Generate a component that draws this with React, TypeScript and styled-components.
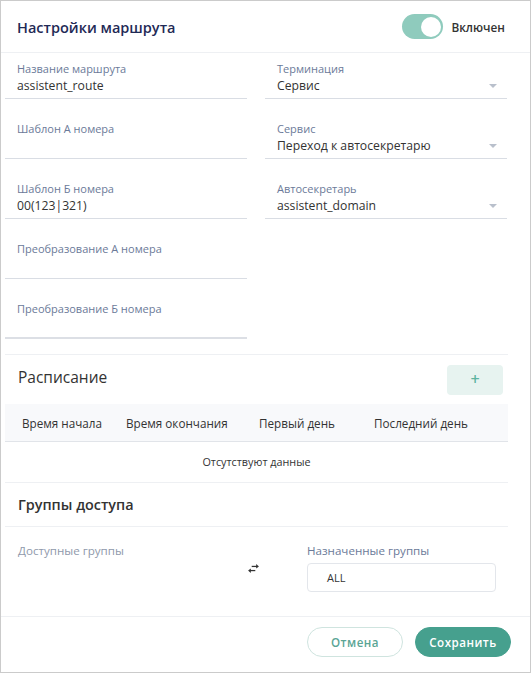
import React from 'react';
import styled, { createGlobalStyle } from 'styled-components';

const GlobalStyle = createGlobalStyle`
	html, body {
		margin: 0;
		padding: 0;
		background: #fff;
	}
	body {
		font-family: "Open Sans", "Noto Sans", sans-serif;
		color: #333;
	}
	* { box-sizing: border-box; }
`;

const Frame = styled.div`
	width: 531px;
	height: 673px;
	border: 1px solid #cbcbcb;
	display: flex;
	flex-direction: column;
	background: #fff;
	overflow: hidden;
`;

const Header = styled.div`
	height: 52px;
	flex-shrink: 0;
	display: flex;
	align-items: center;
	justify-content: space-between;
	padding: 0 25px 0 16px;
	border-bottom: 1px solid #eef0f3;
`;

const Title = styled.h1`
	margin: 0;
	font-size: 14.5px;
	font-weight: 600;
	color: #1f2a56;
	padding-top: 2px;
`;

const SwitchWrap = styled.label`
	display: flex;
	align-items: center;
	gap: 8px;
	font-size: 11.8px;
	font-weight: 600;
	color: #333;
`;

const Track = styled.span<{ $on: boolean }>`
	position: relative;
	width: 41px;
	height: 25px;
	border-radius: 13px;
	background: ${p => (p.$on ? '#8fcbbd' : '#d5d9e0')};
	&::after {
		content: '';
		position: absolute;
		top: 2.5px;
		left: ${p => (p.$on ? '19px' : '2px')};
		width: 20px;
		height: 20px;
		border-radius: 50%;
		background: #fff;
	}
`;

const Body = styled.div`
	flex: 1;
	display: flex;
	flex-direction: column;
	padding: 0 22px 0 4px;
`;

const FormGrid = styled.div`
	display: grid;
	grid-template-columns: 242px 242px;
	column-gap: 18px;
	row-gap: 15px;
	padding: 1px 0 15px;
	border-bottom: 1px solid #eef0f3;
`;

const Field = styled.div<{ $thick?: boolean }>`
	height: 45px;
	padding: 7px 12px 0;
	border-bottom: ${p => (p.$thick ? '2px solid #dcdfe5' : '1px solid #d9dde4')};
	position: relative;
`;

const Label = styled.div`
	font-size: 11px;
	line-height: 15px;
	color: #6b7a99;
`;

const Value = styled.div`
	font-size: 12.2px;
	line-height: 19px;
	color: #333;
`;

const Caret = styled.span`
	position: absolute;
	right: 10px;
	bottom: 10px;
	width: 0;
	height: 0;
	border-left: 4px solid transparent;
	border-right: 4px solid transparent;
	border-top: 4px solid #b9c0cc;
`;

const SectionHead = styled.div`
	display: flex;
	align-items: center;
	justify-content: space-between;
	padding: 9px 5px 0 13px;
	height: 40px;
`;

const SectionTitle = styled.h2<{ $bold?: boolean }>`
	margin: 0;
	font-size: ${p => (p.$bold ? '14.4px' : '15.5px')};
	font-weight: ${p => (p.$bold ? 600 : 500)};
	color: #333;
	margin-top: ${p => (p.$bold ? '0' : '-6px')};
`;

const AddButton = styled.button`
	width: 56px;
	height: 30px;
	border: none;
	border-radius: 4px;
	background: #e7f3f0;
	color: #5db3a0;
	font-size: 16px;
	font-weight: 600;
	font-family: inherit;
	display: flex;
	align-items: center;
	justify-content: center;
	padding: 0 0 2px;
`;

const Table = styled.div`
	margin-top: 9px;
	border-bottom: 1px solid #eef0f3;
`;

const TableHead = styled.div`
	display: grid;
	grid-template-columns: 104px 133px 115px auto;
	align-items: center;
	height: 38px;
	padding-left: 17px;
	background: #f8f9fb;
	border-bottom: 1px solid #e1e4e9;
	font-size: 11.7px;
	color: #333;
`;

const Empty = styled.div`
	height: 40px;
	display: flex;
	align-items: center;
	justify-content: center;
	font-size: 10.8px;
	color: #333;
	padding-bottom: 2px;
`;

const GroupsHead = styled.div`
	height: 44px;
	display: flex;
	align-items: center;
	padding: 0 13px;
	border-bottom: 1px solid #eef0f3;
`;

const Groups = styled.div`
	flex: 1;
	display: grid;
	grid-template-columns: 229px 60px 189px;
	padding: 15px 12px 0 13px;
`;

const GroupLabel = styled.div<{ $muted?: boolean }>`
	font-size: 11.6px;
	line-height: 17px;
	color: ${p => (p.$muted ? '#8f99ab' : '#6b7a99')};
`;

const SwapCell = styled.div`
	padding-top: 14px;
	color: #333;
`;

const GroupBox = styled.div`
	margin-top: 4px;
	height: 29px;
	border: 1px solid #e3e6eb;
	border-radius: 4px;
	display: flex;
	align-items: center;
	padding-left: 19px;
	font-size: 11px;
	color: #333;
`;

const Footer = styled.div`
	height: 56px;
	flex-shrink: 0;
	border-top: 1px solid #eef0f3;
	display: flex;
	justify-content: flex-end;
	align-items: flex-start;
	gap: 12px;
	padding: 10px 19px 0 0;
`;

const Btn = styled.button<{ $primary?: boolean }>`
	width: 96px;
	height: 30px;
	border-radius: 15px;
	font-family: inherit;
	font-size: 11.6px;
	font-weight: 600;
	letter-spacing: 0.5px;
	border: 1px solid ${p => (p.$primary ? '#46a08e' : '#cfe4df')};
	background: ${p => (p.$primary ? '#46a08e' : '#fff')};
	color: ${p => (p.$primary ? '#fff' : '#5aa595')};
`;

const SwapIcon = () => (
	<svg width="13" height="9" viewBox="0 0 14 10" fill="#333">
		<rect x="5" y="2" width="6" height="1.4" />
		<path d="M10 0 L13 2.7 L10 5 Z" />
		<rect x="3" y="6.6" width="6" height="1.4" />
		<path d="M4 5 L1 7.3 L4 10 Z" />
	</svg>
);

type F = { label: string; value?: string; select?: boolean; thick?: boolean };

const left: F[] = [
	{ label: 'Название маршрута', value: 'assistent_route' },
	{ label: 'Шаблон А номера' },
	{ label: 'Шаблон Б номера', value: '00(123|321)' },
	{ label: 'Преобразование А номера' },
	{ label: 'Преобразование Б номера', thick: true },
];

const right: F[] = [
	{ label: 'Терминация', value: 'Сервис', select: true },
	{ label: 'Сервис', value: 'Переход к автосекретарю', select: true },
	{ label: 'Автосекретарь', value: 'assistent_domain', select: true },
];

const columns = ['Время начала', 'Время окончания', 'Первый день', 'Последний день'];

export default function App() {
	const rows: (F | null)[] = [];
	for (let i = 0; i < left.length; i++) {
		rows.push(left[i]);
		rows.push(right[i] || null);
	}
	return (
		<>
			<GlobalStyle />
			<Frame>
				<Header>
					<Title>Настройки маршрута</Title>
					<SwitchWrap>
						<Track $on />
						Включен
					</SwitchWrap>
				</Header>
				<Body>
					<FormGrid>
						{rows.map((f, i) =>
							f ? (
								<Field key={i} $thick={f.thick}>
									<Label>{f.label}</Label>
									<Value>{f.value || '\u00a0'}</Value>
									{f.select && <Caret />}
								</Field>
							) : (
								<div key={i} />
							)
						)}
					</FormGrid>
					<SectionHead>
						<SectionTitle>Расписание</SectionTitle>
						<AddButton>+</AddButton>
					</SectionHead>
					<Table>
						<TableHead>
							{columns.map(c => (
								<span key={c}>{c}</span>
							))}
						</TableHead>
						<Empty>Отсутствуют данные</Empty>
					</Table>
					<GroupsHead>
						<SectionTitle $bold>Группы доступа</SectionTitle>
					</GroupsHead>
					<Groups>
						<GroupLabel $muted>Доступные группы</GroupLabel>
						<SwapCell>
							<SwapIcon />
						</SwapCell>
						<div>
							<GroupLabel>Назначенные группы</GroupLabel>
							<GroupBox>ALL</GroupBox>
						</div>
					</Groups>
				</Body>
				<Footer>
					<Btn>Отмена</Btn>
					<Btn $primary>Сохранить</Btn>
				</Footer>
			</Frame>
		</>
	);
}
